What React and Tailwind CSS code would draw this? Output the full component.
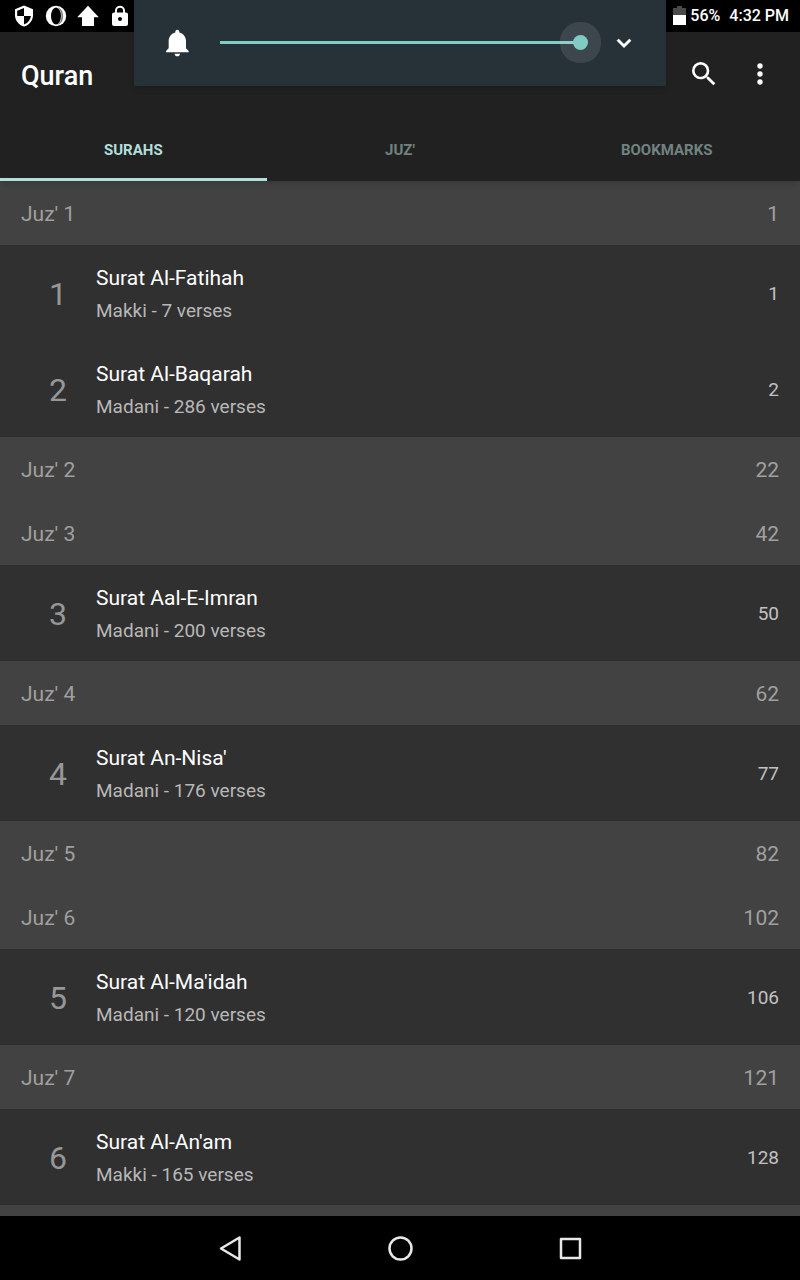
import { useState } from 'react'

const tabs = ['SURAHS', "JUZ'", 'BOOKMARKS']

const rows = [
  { juz: 1, page: 1 },
  { surah: 1, name: 'Surat Al-Fatihah', info: 'Makki - 7 verses', page: 1 },
  { surah: 2, name: 'Surat Al-Baqarah', info: 'Madani - 286 verses', page: 2 },
  { juz: 2, page: 22 },
  { juz: 3, page: 42 },
  { surah: 3, name: 'Surat Aal-E-Imran', info: 'Madani - 200 verses', page: 50 },
  { juz: 4, page: 62 },
  { surah: 4, name: "Surat An-Nisa'", info: 'Madani - 176 verses', page: 77 },
  { juz: 5, page: 82 },
  { juz: 6, page: 102 },
  { surah: 5, name: "Surat Al-Ma'idah", info: 'Madani - 120 verses', page: 106 },
  { juz: 7, page: 121 },
  { surah: 6, name: "Surat Al-An'am", info: 'Makki - 165 verses', page: 128 },
]

function StatusBar() {
  return (
    <div className="flex h-8 shrink-0 items-center justify-between bg-black pr-[11px] pl-3 text-white">
      <div className="flex items-center gap-2">
        <svg viewBox="0 0 24 24" className="size-6">
          <path fill="#fff" d="M12 1.5L3 5.2v6c0 5.2 3.8 10 9 11.3 5.2-1.3 9-6.1 9-11.3v-6z" />
          <path fill="#000" d="M12 4v8H5.2V6.8zM12 12h6.9c-.5 3.9-3.2 7.2-6.9 8.4z" />
        </svg>
        <svg viewBox="0 0 24 24" className="size-6">
          <circle cx="12" cy="12" r="10.2" fill="#fff" />
          <ellipse cx="12" cy="12" rx="5" ry="8.6" fill="#000" />
          <path fill="#777" d="M13.5 3.400c3.400.6 5.600 4 5.600 8.600s-2.200 8-5.600 8.600c2.300-1.300 4-4.600 4-8.600s-1.700-7.300-4-8.600z" />
        </svg>
        <svg viewBox="0 0 24 24" className="size-6">
          <path fill="#fff" d="M12 1.8L1.2 13.2H6V22h12v-8.8h4.8z" />
        </svg>
        <svg viewBox="0 0 24 24" className="size-6">
          <path fill="#fff" d="M18 8.5h-1V6.8a5 5 0 0 0-10 0v1.700H6a2 2 0 0 0-2 2V20a2 2 0 0 0 2 2h12a2 2 0 0 0 2-2v-9.500a2 2 0 0 0-2-2zM12 17a2 2 0 1 1 0-4 2 2 0 0 1 0 4zm3.100-8.500H8.900V6.800a3.100 3.100 0 0 1 6.200 0z" />
        </svg>
      </div>
      <div className="flex items-center text-[16px] font-medium">
        <svg viewBox="0 0 13 20" className="mr-1 h-5 w-[13px]">
          <path fill="#4a4a4a" d="M4 0h5v2h4v8H0V2h4z" />
          <path fill="#fff" d="M0 9h13v10H0z" />
        </svg>
        <span className="mr-[9px]">56%</span>
        <span>4:32 PM</span>
      </div>
    </div>
  )
}

function VolumePanel() {
  const [volume, setVolume] = useState(100)

  return (
    <div className="absolute inset-x-0 top-0 z-20 mx-auto flex h-[86px] w-2/3 max-w-[532px] items-center rounded-b-xs bg-[#263238] px-7 shadow-md">
      <svg viewBox="0 0 24 24" className="size-8 shrink-0 fill-white">
        <path d="M11.5 22c1.1 0 2-.9 2-2h-4c0 1.1.9 2 2 2zm6.5-6v-5.500c0-3.070-2.130-5.640-5-6.320V3.500c0-.83-.67-1.500-1.500-1.500S10 2.670 10 3.500v.68c-2.870.68-5 3.250-5 6.320V16l-2 2v1h17v-1l-2-2z" />
      </svg>
      <input
        type="range"
        aria-label="Notification volume"
        min="0"
        max="100"
        value={volume}
        onChange={(e) => setVolume(Number(e.target.value))}
        className="mb-[2px] ml-[26px] h-[3px] min-w-0 flex-1 appearance-none [&::-webkit-slider-thumb]:size-[15px] [&::-webkit-slider-thumb]:appearance-none [&::-webkit-slider-thumb]:rounded-full [&::-webkit-slider-thumb]:bg-[#80cbc4] [&::-webkit-slider-thumb]:shadow-[0_0_0_13px_rgba(255,255,255,0.1)]"
        style={{ background: `linear-gradient(to right, #80cbc4 ${volume * 0.97}%, #4f5b62 ${volume * 0.97}%)` }}
      />
      <button aria-label="Expand" className="ml-[22px] shrink-0">
        <svg viewBox="0 0 24 24" className="size-7 fill-white stroke-white stroke-[0.5]">
          <path d="M16.590 8.590L12 13.170 7.410 8.590 6 10l6 6 6-6z" />
        </svg>
      </button>
    </div>
  )
}

function Toolbar() {
  return (
    <div className="flex h-[85px] items-center justify-between pr-6 pb-[2px] pl-[21px]">
      <h1 className="pt-[6px] text-[27px] font-medium text-white">Quran</h1>
      <div className="flex gap-6">
        <button aria-label="Search">
          <svg viewBox="0 0 24 24" className="size-8 fill-white">
            <path d="M15.500 14h-.79l-.28-.27A6.471 6.471 0 0 0 16 9.500 6.500 6.500 0 1 0 9.500 16c1.610 0 3.090-.59 4.230-1.570l.27.28v.79l5 4.990L20.490 19l-4.990-5zm-6 0C7.010 14 5 11.990 5 9.500S7.010 5 9.500 5 14 7.010 14 9.500 11.990 14 9.500 14z" />
          </svg>
        </button>
        <button aria-label="More options">
          <svg viewBox="0 0 24 24" className="size-8 fill-white">
            <circle cx="12" cy="6" r="2" />
            <circle cx="12" cy="12" r="2" />
            <circle cx="12" cy="18" r="2" />
          </svg>
        </button>
      </div>
    </div>
  )
}

function JuzRow({ row }) {
  return (
    <li className="flex h-16 items-center justify-between bg-[#424242] px-[21px] pt-1 text-[21px] text-[#a0a0a0]">
      <span>Juz' {row.juz}</span>
      <span>{row.page}</span>
    </li>
  )
}

function SurahRow({ row }) {
  return (
    <li className="flex h-24 items-center bg-[#303030] pt-[3px] pr-[21px]">
      <span className="w-24 shrink-0 pb-[2px] pl-5 text-center text-[32px] text-[#979797]">{row.surah}</span>
      <div className="flex-1 leading-8">
        <div className="mb-px text-[21px] text-white">{row.name}</div>
        <div className="text-[19px] text-[#b8b8b8]">{row.info}</div>
      </div>
      <span className="text-[19px] text-[#c1c1c1]">{row.page}</span>
    </li>
  )
}

function NavBar() {
  return (
    <nav className="flex h-16 shrink-0 items-center justify-center gap-[138px] bg-black">
      <button aria-label="Back">
        <svg viewBox="0 0 32 32" className="size-8 fill-none stroke-[#e8e8e8] stroke-[2.5]" strokeLinejoin="round">
          <path d="M7 16.5L25.5 5.5v22z" />
        </svg>
      </button>
      <button aria-label="Home">
        <svg viewBox="0 0 32 32" className="size-8 fill-none stroke-[#e8e8e8] stroke-[2.5]">
          <circle cx="16.5" cy="16.5" r="11" />
        </svg>
      </button>
      <button aria-label="Recent apps">
        <svg viewBox="0 0 32 32" className="size-8 fill-none stroke-[#e8e8e8] stroke-[2.5]" strokeLinejoin="round">
          <path d="M7 7h19v19H7z" />
        </svg>
      </button>
    </nav>
  )
}

export default function App() {
  const [active, setActive] = useState('SURAHS')

  return (
    <div className="relative flex h-screen flex-col overflow-hidden bg-[#424242] font-['Roboto',sans-serif]">
      <StatusBar />
      <VolumePanel />

      <header className="relative z-10 shrink-0 bg-[#212121] shadow-md">
        <Toolbar />
        <div role="tablist" className="grid h-16 grid-cols-3">
          {tabs.map((tab) => (
            <button
              key={tab}
              role="tab"
              aria-selected={active === tab}
              onClick={() => setActive(tab)}
              className={`border-y-3 border-t-transparent pt-[2px] text-[15px] font-bold ${
                active === tab ? 'border-b-[#b2dfdb] text-[#b2dfdb]' : 'border-b-transparent text-[#718381]'
              }`}
            >
              {tab}
            </button>
          ))}
        </div>
      </header>

      <ul className="min-h-0 flex-1 overflow-hidden">
        {rows.map((row) =>
          row.juz ? <JuzRow key={`juz-${row.juz}`} row={row} /> : <SurahRow key={`surah-${row.surah}`} row={row} />
        )}
      </ul>

      <NavBar />
    </div>
  )
}
